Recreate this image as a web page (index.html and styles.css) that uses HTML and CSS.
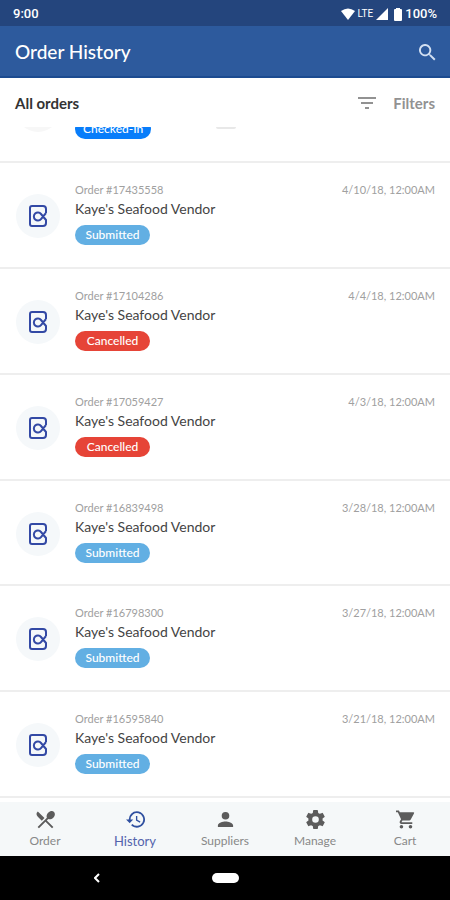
FILE: index.html
```html
<!DOCTYPE html>
<html lang="en">
<head>
<meta charset="utf-8">
<meta name="viewport" content="width=device-width, initial-scale=1">
<title>Order History</title>
<link rel="stylesheet" href="styles.css">
</head>
<body>
<svg hidden>
  <symbol id="brand" viewBox="0 0 18 22">
    <path d="M17 8V4Q17 1 14 1H3Q1 1 1 3V19Q1 21 3 21H14Q17 21 17 18V15L12 9A4 4 0 1 0 12 14L17 8"/>
  </symbol>
</svg>
<div class="screen">
  <div class="status">
    <span class="clock">9:00</span>
    <div class="indicators">
      <svg class="wifi" viewBox="0 0 14 12"><path d="M0 3Q7-2 14 3L7 12Z"/></svg>
      <span class="network">LTE</span>
      <svg class="signal" viewBox="0 0 12 12"><path d="M12 0V12H0Z"/></svg>
      <svg class="battery" viewBox="0 0 8 13"><path d="M2 0H6V1H7Q8 1 8 2V12Q8 13 7 13H1Q0 13 0 12V2Q0 1 1 1H2Z"/></svg>
      <span class="charge">100%</span>
    </div>
  </div>
  <header class="appbar">
    <h1>Order History</h1>
    <button class="search" type="button" aria-label="Search"><svg viewBox="3 3 18 18"><path d="M15.500 14h-.79l-.28-.27A6.500 6.500 0 1 0 13.730 14.430l.27.28v.79l5 4.990L20.490 19zM9.500 14a4.500 4.500 0 1 1 0-9 4.500 4.500 0 0 1 0 9z"/></svg></button>
  </header>
  <div class="toolbar">
    <h2>All orders</h2>
    <button class="filters" type="button"><svg viewBox="0 0 18 12"><path d="M0 0H18V2H0ZM3 5H15V7H3ZM7 10H11V12H7Z"/></svg><span>Filters</span></button>
  </div>
  <main>
    <div class="scrolled">
      <article class="order">
        <span class="avatar"></span>
        <div class="details"><span class="number">&nbsp;</span><h3>&nbsp;</h3><span class="badge checked">Checked-In</span></div>
      </article>
      <span class="loader"></span>
    </div>
    <div class="list">
      <article class="order">
        <span class="avatar"><svg><use href="#brand"/></svg></span>
        <div class="details"><span class="number">Order #17435558</span><h3>Kaye's Seafood Vendor</h3><span class="badge">Submitted</span></div>
        <time>4/10/18, 12:00AM</time>
      </article>
      <article class="order">
        <span class="avatar"><svg><use href="#brand"/></svg></span>
        <div class="details"><span class="number">Order #17104286</span><h3>Kaye's Seafood Vendor</h3><span class="badge cancelled">Cancelled</span></div>
        <time>4/4/18, 12:00AM</time>
      </article>
      <article class="order">
        <span class="avatar"><svg><use href="#brand"/></svg></span>
        <div class="details"><span class="number">Order #17059427</span><h3>Kaye's Seafood Vendor</h3><span class="badge cancelled">Cancelled</span></div>
        <time>4/3/18, 12:00AM</time>
      </article>
      <article class="order">
        <span class="avatar"><svg><use href="#brand"/></svg></span>
        <div class="details"><span class="number">Order #16839498</span><h3>Kaye's Seafood Vendor</h3><span class="badge">Submitted</span></div>
        <time>3/28/18, 12:00AM</time>
      </article>
      <article class="order">
        <span class="avatar"><svg><use href="#brand"/></svg></span>
        <div class="details"><span class="number">Order #16798300</span><h3>Kaye's Seafood Vendor</h3><span class="badge">Submitted</span></div>
        <time>3/27/18, 12:00AM</time>
      </article>
      <article class="order">
        <span class="avatar"><svg><use href="#brand"/></svg></span>
        <div class="details"><span class="number">Order #16595840</span><h3>Kaye's Seafood Vendor</h3><span class="badge">Submitted</span></div>
        <time>3/21/18, 12:00AM</time>
      </article>
    </div>
  </main>
  <nav class="tabs">
    <a href="#order"><svg viewBox="2 2 20 20"><path d="M8.100 13.340l2.830-2.830L3.910 3.500a4.010 4.010 0 0 0 0 5.660zM14.880 11.530c1.530.71 3.680.21 5.270-1.380 1.910-1.910 2.280-4.650.81-6.120-1.460-1.460-4.200-1.100-6.120.81-1.590 1.590-2.090 3.740-1.380 5.270L3.700 19.870l1.410 1.410L12 14.410l6.880 6.880 1.410-1.410L13.410 13z"/></svg><span>Order</span></a>
    <a href="#history" class="active" aria-current="page"><svg viewBox="1 3 21 18"><path d="M13 3a9 9 0 0 0-9 9H1l3.890 3.890.07.14L9 12H6a7 7 0 1 1 2.060 4.940l-1.420 1.420A9 9 0 1 0 13 3zM12 8v5l4.280 2.540.72-1.210-3.500-2.080V8z"/></svg><span>History</span></a>
    <a href="#suppliers"><svg viewBox="2 2 20 20"><path d="M12 12a4 4 0 1 0 0-8 4 4 0 0 0 0 8zM12 14c-2.670 0-8 1.340-8 4v2h16v-2c0-2.660-5.330-4-8-4z"/></svg><span>Suppliers</span></a>
    <a href="#manage"><svg viewBox="2 2 20 20"><path fill-rule="evenodd" d="M19.430 12.980a8 8 0 0 0 0-1.960l2.110-1.650a.5.500 0 0 0 .12-.64l-2-3.460a.5.500 0 0 0-.61-.22l-2.490 1a7.300 7.300 0 0 0-1.690-.98l-.38-2.650A.5.500 0 0 0 14 2h-4a.5.500 0 0 0-.49.420l-.38 2.650a7.700 7.700 0 0 0-1.690.98l-2.490-1a.5.500 0 0 0-.61.220l-2 3.460a.5.500 0 0 0 .12.640l2.110 1.650a8 8 0 0 0 0 1.960l-2.110 1.650a.5.500 0 0 0-.12.640l2 3.460a.5.500 0 0 0 .61.220l2.490-1a7.300 7.300 0 0 0 1.690.98l.38 2.650A.5.500 0 0 0 10 22h4a.5.500 0 0 0 .49-.42l.38-2.650a7.700 7.700 0 0 0 1.690-.98l2.490 1a.5.500 0 0 0 .61-.22l2-3.460a.5.500 0 0 0-.12-.64zM12 15.500a3.500 3.500 0 1 1 0-7 3.500 3.500 0 0 1 0 7z"/></svg><span>Manage</span></a>
    <a href="#cart"><svg viewBox="1 2 21 20"><path d="M7 18a2 2 0 1 0 0 4 2 2 0 0 0 0-4zM1 2v2h2l3.600 7.590-1.350 2.450C4.520 15.370 5.480 17 7 17h12v-2H7.420a.25.250 0 0 1-.25-.25L8.100 13h7.450c.75 0 1.410-.41 1.750-1.030l3.580-6.490A1 1 0 0 0 20 4H5.210l-.94-2zM17 18a2 2 0 1 0 0 4 2 2 0 0 0 0-4z"/></svg><span>Cart</span></a>
  </nav>
  <div class="system">
    <button class="back" type="button" aria-label="Back"><svg viewBox="0 0 6 10"><path d="M5 1L1 5L5 9"/></svg></button>
    <button class="home" type="button" aria-label="Home"></button>
    <span></span>
  </div>
</div>
</body>
</html>
```
FILE: styles.css
```css
* { box-sizing: border-box; }
body { margin: 0; font-family: Lato, sans-serif; color: #444; background: #fff; }
h1, h2, h3 { margin: 0; }
button { border: 0; padding: 0; background: none; font: inherit; color: inherit; }
svg { display: block; fill: currentColor; }
svg[hidden] { display: none; }
.screen { min-height: 100vh; display: flex; flex-direction: column; }

.status { height: 26px; padding: 2px 13px 0; display: flex; align-items: center; justify-content: space-between; background: #24457d; color: #fff; font: 500 13px/16px Roboto, sans-serif; }
.indicators { display: flex; align-items: center; gap: 3px; }
.network { font-size: 10px; font-weight: 400; }
.wifi { width: 14px; height: 12px; }
.signal { width: 12px; height: 12px; }
.battery { width: 8px; height: 13px; margin-left: 3px; }

.appbar { height: 52px; padding: 2px 14px 0 15px; display: flex; align-items: center; justify-content: space-between; background: #2d5a9d; border-bottom: 2px solid #1c4b90; color: #fff; }
.appbar h1 { font-size: 19px; line-height: 24px; font-weight: 500; }
.search { color: #d3e0f2; }
.search svg { width: 17px; height: 17px; }

.toolbar { height: 49px; padding: 0 15px; display: flex; align-items: center; justify-content: space-between; }
.toolbar h2 { font-size: 15px; line-height: 20px; font-weight: 700; color: #333; }
.filters { display: flex; align-items: center; gap: 17px; font-size: 15px; line-height: 20px; font-weight: 700; color: #929292; }
.filters svg { width: 18px; height: 12px; }

main { flex: 1; display: flex; flex-direction: column; padding-bottom: 4px; }
.scrolled { position: relative; height: 36px; overflow: hidden; display: flex; flex-direction: column; justify-content: flex-end; }
.scrolled .order { flex: none; height: 106px; }
.loader { position: absolute; top: 0; left: 48%; width: 20px; height: 2px; border-radius: 0 0 10px 10px; background: #e8e8e8; }
.list { flex: 1; display: grid; grid-auto-rows: 1fr; }
.order { display: flex; align-items: flex-start; padding: 18px 15px 18px 16px; border-bottom: 2px solid #eee; }
.avatar { width: 44px; height: 44px; margin: 13px 15px 0 0; border-radius: 50%; display: grid; place-items: center; background: #f5f8fa; }
.avatar svg { width: 18px; height: 22px; fill: none; stroke: #3349a5; stroke-width: 2; stroke-linejoin: round; }
.scrolled .avatar { background: #f7f7f7; }
.details { flex: 1; display: flex; flex-direction: column; align-items: flex-start; }
.number, time { font-size: 11px; line-height: 18px; color: #a0a0a0; }
.details h3 { font-size: 14px; line-height: 20px; font-weight: 400; color: #444; }
.badge { min-width: 75px; margin-top: 6px; padding: 0 8px; border-radius: 10px; font-size: 12px; line-height: 20px; font-weight: 500; text-align: center; color: #fff; background: #62afe3; }
.badge.cancelled { background: #e64437; }
.badge.checked { background: #087dfa; }

.tabs { height: 54px; padding-top: 2px; display: grid; grid-template-columns: repeat(5, 1fr); background: #f5f8f9; }
.tabs a { display: flex; flex-direction: column; align-items: center; justify-content: center; gap: 3px; text-decoration: none; font-size: 12px; line-height: 18px; color: #888; }
.tabs svg { width: 19px; height: 19px; color: #5c5c5c; }
.tabs .active { font-size: 13px; color: #5363ac; }
.tabs .active svg { color: #2f50a0; }

.system { height: 44px; display: grid; grid-template-columns: 1fr auto 1fr; align-items: center; background: #000; color: #fff; }
.back { justify-self: center; margin-right: 18px; }
.back svg { width: 6px; height: 10px; fill: none; stroke: currentColor; stroke-width: 2; }
.home { width: 27px; height: 10px; border-radius: 5px; background: #fff; }
```
